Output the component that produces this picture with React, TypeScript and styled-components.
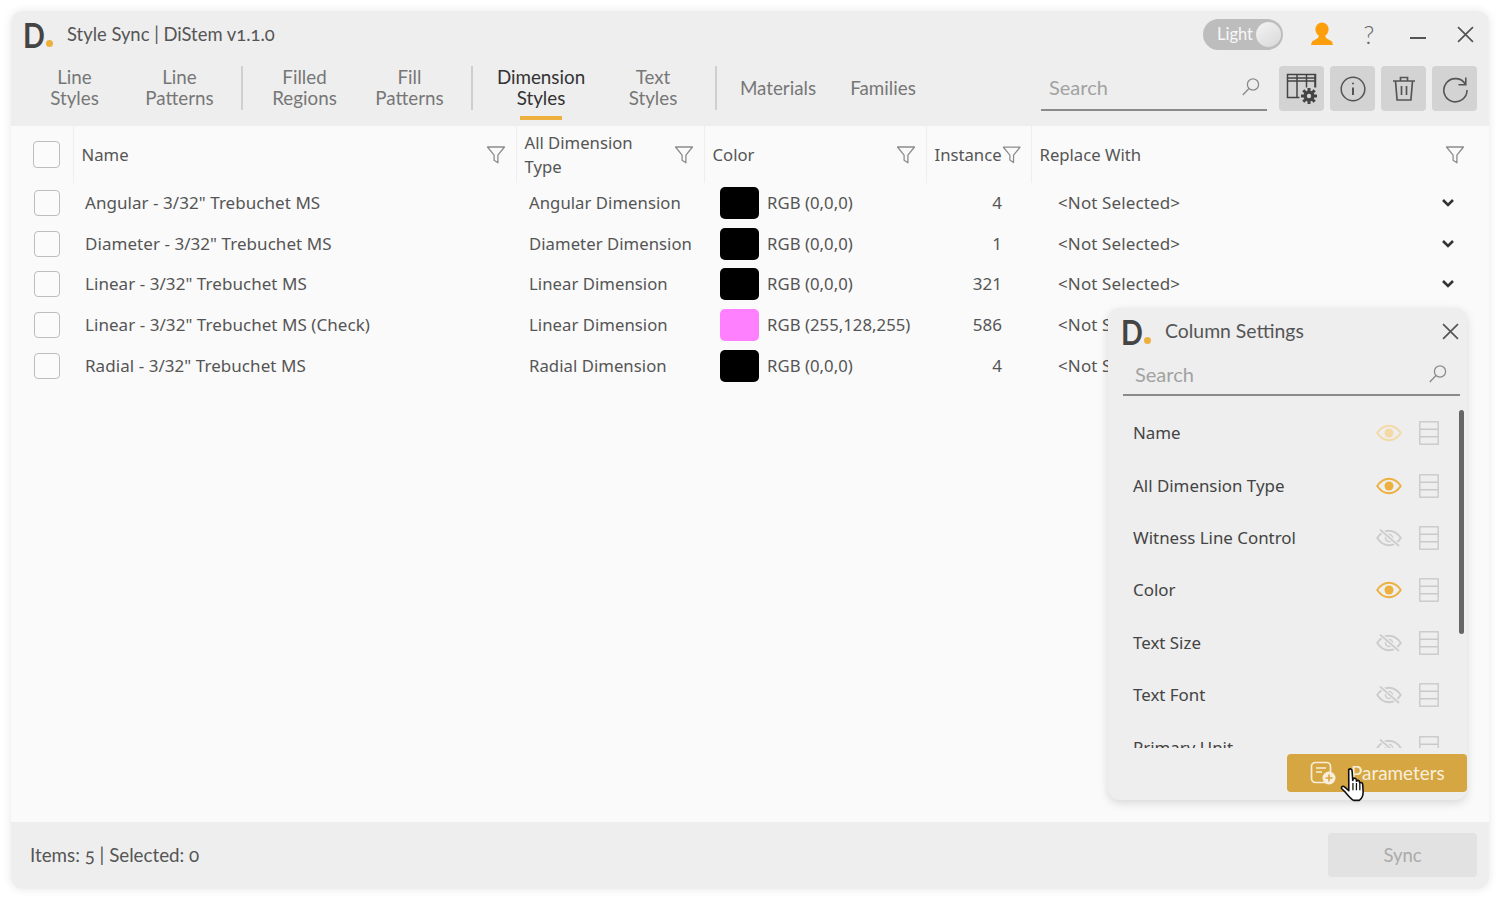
import React from 'react';
import styled, { createGlobalStyle } from 'styled-components';

const GlobalStyle = createGlobalStyle`
    html, body {
        margin: 0;
        padding: 0;
        background: #ffffff;
    }
    * {
        box-sizing: border-box;
    }
`;

const HEAD_FONT = `'Lato', 'Open Sans', sans-serif`;
const BODY_FONT = `'Noto Sans', 'Open Sans', sans-serif`;

const Page = styled.div`
    width: 1500px;
    height: 900px;
    padding: 11px;
    overflow: hidden;
`;

const Window = styled.div`
    position: relative;
    width: 1478px;
    height: 878px;
    display: flex;
    flex-direction: column;
    border-radius: 12px;
    overflow: hidden;
    background: #fafafa;
    box-shadow: 0 0 10px rgba(0, 0, 0, 0.1);
`;

const Header = styled.header`
    background: #eeeeee;
    height: 115px;
    flex: none;
`;

const TitleBar = styled.div`
    height: 46px;
    display: flex;
    align-items: center;
    padding: 0 15px 0 14px;
`;

const Logo = styled.span`
    position: relative;
    display: inline-block;
    width: 30px;
    height: 34px;

    &::after {
        content: '';
        position: absolute;
        left: 21px;
        bottom: 4px;
        width: 7px;
        height: 7px;
        border-radius: 50%;
        background: #edb03e;
    }
`;

const LogoLetter = styled.span`
    display: inline-block;
    margin-left: -2px;
    font: 700 35px/34px ${HEAD_FONT};
    color: #444444;
    transform: scaleX(0.82);
    transform-origin: left center;
`;

const AppTitle = styled.div`
    margin-left: 12px;
    font: 400 18.4px/24px ${HEAD_FONT};
    font-variant-numeric: oldstyle-nums;
    color: #555555;
`;

const TitleActions = styled.div`
    margin-left: auto;
    display: flex;
    align-items: center;
`;

const Toggle = styled.div`
    width: 80px;
    height: 31px;
    border-radius: 16px;
    background: #bdbdbd;
    display: flex;
    align-items: center;
    justify-content: space-between;
    padding: 0 2px 0 14px;
    font: 400 16.5px/20px ${HEAD_FONT};
    color: #f8f8f8;
`;

const Knob = styled.span`
    width: 25px;
    height: 25px;
    border-radius: 50%;
    background: linear-gradient(145deg, #f4f4f4, #d8d8d8);
`;

const WindowIcon = styled.span<{ $w: number }>`
    display: inline-flex;
    justify-content: center;
    align-items: center;
    width: ${(p) => p.$w}px;
    height: 30px;
`;

const Help = styled.span`
    font: 300 25px/30px ${HEAD_FONT};
    color: #666666;
`;

const TabBar = styled.div`
    height: 69px;
    display: flex;
    align-items: flex-start;
    padding: 9px 0 0 11px;
`;

const Tab = styled.div<{ $w: number; $active?: boolean }>`
    position: relative;
    width: ${(p) => p.$w}px;
    height: 44px;
    padding-bottom: 2px;
    display: flex;
    align-items: center;
    justify-content: center;
    text-align: center;
    font: 400 18.8px/21px ${HEAD_FONT};
    color: ${(p) => (p.$active ? '#333333' : '#777777')};

    &::after {
        content: '';
        display: ${(p) => (p.$active ? 'block' : 'none')};
        position: absolute;
        left: 50%;
        bottom: -10px;
        width: 42px;
        height: 4px;
        margin-left: -21px;
        background: #edb03e;
    }
`;

const TabDivider = styled.div<{ $gap: number }>`
    width: 2px;
    height: 44px;
    background: #cfcfcf;
    margin: 0 ${(p) => p.$gap}px 0 ${(p) => p.$gap}px;
`;

const SearchBox = styled.div<{ $w: number }>`
    width: ${(p) => p.$w}px;
    height: 45px;
    display: flex;
    align-items: center;
    justify-content: space-between;
    padding: 0 6px 2px 8px;
    border-bottom: 2px solid #8a8a8a;
    font: 400 20px/24px ${HEAD_FONT};
    color: #a2a2a2;
`;

const ToolSearch = styled(SearchBox)`
    margin-left: auto;
    margin-right: 12px;
`;

const ToolButtons = styled.div`
    display: flex;
    gap: 6px;
    margin-right: 12px;
`;

const ToolButton = styled.div`
    width: 45px;
    height: 45px;
    border-radius: 4px;
    background: #d3d3d3;
    display: flex;
    align-items: center;
    justify-content: center;
`;

const TableArea = styled.main`
    flex: 1;
    min-height: 0;
    background: #fafafa;
`;

const COLUMNS = '62px 443px 188px 222px 105px 444px';

const HeadRow = styled.div`
    height: 57px;
    display: grid;
    grid-template-columns: ${COLUMNS};
`;

const HeadCell = styled.div<{ $line?: boolean }>`
    display: flex;
    align-items: center;
    justify-content: space-between;
    padding: 0 10px 0 7.5px;
    border-left: ${(p) => (p.$line ? '1px solid #eeeeee' : 'none')};
    font: 400 16.7px/24px ${BODY_FONT};
    color: #555555;
`;

const CheckCell = styled.div`
    display: flex;
    align-items: center;
    padding-left: 22px;
`;

const Check = styled.span<{ $size: number }>`
    display: block;
    width: ${(p) => p.$size}px;
    height: ${(p) => p.$size}px;
    border: 1.5px solid #bdbdbd;
    border-radius: 4px;
    background: #fbfbfb;
`;

const Row = styled.div`
    height: 40.6px;
    display: grid;
    grid-template-columns: ${COLUMNS};
    font: 400 17px/24px ${BODY_FONT};
    color: #555555;
    letter-spacing: 0.05px;
`;

const RowCheck = styled(CheckCell)`
    padding-left: 23px;
`;

const Cell = styled.div`
    display: flex;
    align-items: center;
    padding-left: 12px;
    white-space: nowrap;
    overflow: hidden;
`;

const TypeCell = styled(Cell)`
    padding-left: 13px;
    font-size: 16.7px;
`;

const ColorCell = styled(Cell)`
    padding-left: 16px;
    gap: 8px;
    font-size: 16.7px;
`;

const Swatch = styled.span<{ $color: string }>`
    width: 39px;
    height: 32px;
    border-radius: 5px;
    background: ${(p) => p.$color};
`;

const CountCell = styled(Cell)`
    justify-content: flex-end;
    padding-right: 29px;
`;

const ReplaceCell = styled(Cell)`
    justify-content: space-between;
    padding-left: 27px;
    padding-right: 20px;
    letter-spacing: 0.12px;
`;

const Footer = styled.footer`
    height: 67px;
    flex: none;
    background: #eeeeee;
    display: flex;
    align-items: center;
    justify-content: space-between;
    padding: 0 12px 2px 19px;
    font: 400 18.8px/24px ${HEAD_FONT};
    font-variant-numeric: oldstyle-nums;
    color: #555555;
`;

const SyncButton = styled.div`
    width: 149px;
    height: 44px;
    border-radius: 4px;
    background: #e2e2e2;
    display: flex;
    align-items: center;
    justify-content: center;
    color: #ababab;
    font: 400 18.5px/24px ${HEAD_FONT};
`;

const Panel = styled.aside`
    position: absolute;
    top: 297px;
    right: 22px;
    width: 359px;
    height: 492px;
    border-radius: 12px;
    background: #eeeeee;
    box-shadow: 0 3px 10px rgba(0, 0, 0, 0.14);
    padding: 0 0 0 15px;
    display: flex;
    flex-direction: column;
`;

const PanelHead = styled.div`
    height: 46px;
    flex: none;
    display: flex;
    align-items: center;
    padding: 0 8px 0 0;
`;

const PanelTitle = styled.div`
    margin-left: 12px;
    font: 400 19.4px/24px ${HEAD_FONT};
    color: #555555;
`;

const PanelClose = styled.span`
    margin-left: auto;
    display: inline-flex;
`;

const PanelSearch = styled(SearchBox)`
    flex: none;
    height: 42px;
    padding-left: 12px;
    padding-right: 12px;
    padding-top: 1px;
`;

const PanelBody = styled.div`
    position: relative;
    height: 352px;
    flex: none;
    overflow: hidden;
    padding-top: 11px;
`;

const ColumnRow = styled.div`
    height: 52.4px;
    display: flex;
    align-items: center;
    padding: 0 28px 0 10px;
    font: 400 16.9px/24px ${BODY_FONT};
    color: #444444;
`;

const ColumnName = styled.span`
    flex: 1;
`;

const ColumnIcons = styled.span`
    display: flex;
    align-items: center;
    gap: 17px;
`;

const ScrollThumb = styled.div`
    position: absolute;
    top: 14px;
    right: 3px;
    width: 5px;
    height: 224px;
    border-radius: 3px;
    background: #666666;
`;

const ParamButton = styled.div`
    align-self: flex-end;
    width: 180px;
    height: 38px;
    margin-top: 6px;
    border-radius: 4px;
    background: #d6a642;
    display: flex;
    align-items: center;
    padding-left: 23px;
    gap: 15px;
    color: #f7efdc;
    font: 400 18.9px/24px ${HEAD_FONT};
`;

const Pointer = styled.span`
    position: absolute;
    left: 1340px;
    top: 767px;
    display: block;
    line-height: 0;
`;

function FilterIcon() {
    return (
        <svg width="20" height="20" viewBox="0 0 20 20" fill="none" stroke="#8c8c8c" strokeWidth="1.3" strokeLinejoin="round">
            <path d="M1.5 2h17l-6.6 8.2v7.600l-3.800-2.600v-5z" />
        </svg>
    );
}

function SearchIcon() {
    return (
        <svg width="20" height="20" viewBox="0 0 20 20" fill="none" stroke="#8a8a8a" strokeWidth="1.3">
            <circle cx="12" cy="7.500" r="5.600" />
            <path d="M8 11.500L1.800 18" />
        </svg>
    );
}

function CloseIcon({ size = 16 }: { size?: number }) {
    return (
        <svg width={size} height={size} viewBox="0 0 16 16" fill="none" stroke="#555" strokeWidth="1.6">
            <path d="M1 1l14 14M15 1L1 15" />
        </svg>
    );
}

function Chevron() {
    return (
        <svg width="14" height="10" viewBox="0 0 14 10" fill="none" stroke="#333" strokeWidth="2.6">
            <path d="M2 2l5 5 5-5" />
        </svg>
    );
}

function UserIcon() {
    return (
        <svg width="22" height="24" viewBox="0 0 22 24" fill="#fd9f0d">
            <ellipse cx="11" cy="7.500" rx="6.600" ry="7" />
            <path d="M8 13h6l1 3 6 3.400 1 3.600H0l1-3.600L7 16z" />
        </svg>
    );
}

function TableGearIcon() {
    return (
        <svg width="32" height="32" viewBox="0 0 32 32" fill="none">
            <g stroke="#444" strokeWidth="1.5">
                <rect x="1.500" y="1.500" width="28" height="23" />
                <path d="M1.500 5h28M1.500 8h28M11 1.500v23M20.500 1.500v16M29 1.500v16" />
            </g>
            <rect x="13.500" y="14.500" width="18" height="17" fill="#d3d3d3" />
            <circle cx="23" cy="23" r="5.500" fill="#444" />
            <path d="M23 15v16M15 23h16M17.300 17.300l11.400 11.400M28.700 17.300L17.300 28.700" stroke="#444" strokeWidth="3" />
            <circle cx="23" cy="23" r="2.200" fill="#d3d3d3" />
        </svg>
    );
}

function InfoIcon() {
    return (
        <svg width="28" height="28" viewBox="0 0 28 28" fill="none" stroke="#555" strokeWidth="1.5">
            <circle cx="14" cy="14" r="11.800" />
            <path d="M14 12.500v7.500" strokeWidth="2" />
            <circle cx="14" cy="8.600" r="1" fill="#555" stroke="none" />
        </svg>
    );
}

function TrashIcon() {
    return (
        <svg width="26" height="28" viewBox="0 0 26 28" fill="none" stroke="#555" strokeWidth="1.7">
            <path d="M2 6h22M9.500 6V2.500h7V6M4.500 6l1.600 19h13.800L21.500 6M10.500 11v9M15.500 11v9" />
        </svg>
    );
}

function RefreshIcon() {
    return (
        <svg width="28" height="28" viewBox="0 0 28 28" fill="none" stroke="#555" strokeWidth="1.6">
            <path d="M24.500 9.500A11.600 11.600 0 1 0 26 15" />
            <path d="M24.800 2.500v7.300h-7.300" />
        </svg>
    );
}

function EyeIcon({ tone }: { tone: 'on' | 'faint' | 'off' }) {
    const color = tone === 'on' ? '#edb03e' : tone === 'faint' ? '#f3d9a4' : '#cccccc';
    return (
        <svg width="26" height="18" viewBox="0 0 26 18" fill="none" stroke={color} strokeWidth="1.9">
            <path d="M1.200 9C4.500 4 8.500 1.800 13 1.800S21.500 4 24.800 9C21.500 14 17.500 16.200 13 16.200S4.500 14 1.200 9z" />
            {tone === 'off' ? (
                <>
                    <circle cx="13" cy="9" r="3.500" strokeWidth="1.500" />
                    <path d="M4 0.500L23 17" stroke="#eeeeee" strokeWidth="4" />
                    <path d="M4 0.500L23 17" strokeWidth="1.700" />
                </>
            ) : (
                <circle cx="13" cy="9" r="4.500" fill={color} stroke="none" />
            )}
        </svg>
    );
}

function RowsIcon() {
    return (
        <svg width="20" height="24" viewBox="0 0 20 24" fill="none" stroke="#c9c9c9" strokeWidth="1.4">
            <rect x="0.800" y="0.800" width="18.400" height="22.400" />
            <path d="M0.800 8.300h18.400M0.800 15.700h18.400" />
        </svg>
    );
}

function ParamIcon() {
    return (
        <svg width="26" height="24" viewBox="0 0 26 24" fill="none" stroke="#f7efdc" strokeWidth="1.700">
            <rect x="1.500" y="1.500" width="19" height="20" rx="4" />
            <path d="M6 7h10M6 11h6" />
            <circle cx="19" cy="17" r="6.500" fill="#f7efdc" stroke="none" />
            <path d="M15.500 17h7M19 13.500v7" stroke="#d6a642" strokeWidth="1.600" />
        </svg>
    );
}

function HandCursor() {
    return (
        <svg width="28" height="36" viewBox="0 0 26 34">
            <path
                d="M8 2.500c1.300-1.300 3-.6 3.200 1.200l.6 9 .4-1.200c.8-1.500 2.800-1.200 3 .5l.2 1.500c.6-1.300 2.600-1.100 2.800.5l.2 1.300c.7-1 2.600-.8 2.800.9l.4 6.800c.2 4-1.600 7-3.600 8.500h-5.500c-2.500-1.500-5-4.500-7.500-7.500L1.500 20.500c-1-1.500.8-3 2.500-1.800l4.100 3.600z"
                fill="#ffffff"
                stroke="#111111"
                strokeWidth="1.500"
                strokeLinejoin="round"
            />
            <path d="M12 15v7M15.300 15v7M18.500 16v6" stroke="#111111" strokeWidth="1.200" fill="none" />
        </svg>
    );
}

const rows = [
    { name: 'Angular - 3/32" Trebuchet MS', type: 'Angular Dimension', color: '#000000', rgb: 'RGB (0,0,0)', count: 4 },
    { name: 'Diameter - 3/32" Trebuchet MS', type: 'Diameter Dimension', color: '#000000', rgb: 'RGB (0,0,0)', count: 1 },
    { name: 'Linear - 3/32" Trebuchet MS', type: 'Linear Dimension', color: '#000000', rgb: 'RGB (0,0,0)', count: 321 },
    { name: 'Linear - 3/32" Trebuchet MS (Check)', type: 'Linear Dimension', color: '#ff80ff', rgb: 'RGB (255,128,255)', count: 586 },
    { name: 'Radial - 3/32" Trebuchet MS', type: 'Radial Dimension', color: '#000000', rgb: 'RGB (0,0,0)', count: 4 },
];

const columnSettings: { name: string; tone: 'on' | 'faint' | 'off' }[] = [
    { name: 'Name', tone: 'faint' },
    { name: 'All Dimension Type', tone: 'on' },
    { name: 'Witness Line Control', tone: 'off' },
    { name: 'Color', tone: 'on' },
    { name: 'Text Size', tone: 'off' },
    { name: 'Text Font', tone: 'off' },
    { name: 'Primary Unit', tone: 'off' },
];

export default function App() {
    return (
        <Page>
            <GlobalStyle />
            <Window>
                <Header>
                    <TitleBar>
                        <Logo>
                            <LogoLetter>D</LogoLetter>
                        </Logo>
                        <AppTitle>Style Sync | DiStem v1.1.0</AppTitle>
                        <TitleActions>
                            <Toggle>
                                Light
                                <Knob />
                            </Toggle>
                            <WindowIcon $w={77}>
                                <UserIcon />
                            </WindowIcon>
                            <WindowIcon $w={18}>
                                <Help>?</Help>
                            </WindowIcon>
                            <WindowIcon $w={79}>
                                <svg width="16" height="16" viewBox="0 0 16 16" stroke="#555" strokeWidth="2">
                                    <path d="M0 12h16" />
                                </svg>
                            </WindowIcon>
                            <CloseIcon size={17} />
                        </TitleActions>
                    </TitleBar>
                    <TabBar>
                        <Tab $w={105}>
                            Line
                            <br />
                            Styles
                        </Tab>
                        <Tab $w={105}>
                            Line
                            <br />
                            Patterns
                        </Tab>
                        <TabDivider $gap={9} />
                        <Tab $w={105}>
                            Filled
                            <br />
                            Regions
                        </Tab>
                        <Tab $w={105}>
                            Fill
                            <br />
                            Patterns
                        </Tab>
                        <TabDivider $gap={9} />
                        <Tab $w={118} $active>
                            Dimension
                            <br />
                            Styles
                        </Tab>
                        <Tab $w={106}>
                            Text
                            <br />
                            Styles
                        </Tab>
                        <TabDivider $gap={9} />
                        <Tab $w={104}>Materials</Tab>
                        <Tab $w={106}>Families</Tab>
                        <ToolSearch $w={226}>
                            Search
                            <SearchIcon />
                        </ToolSearch>
                        <ToolButtons>
                            <ToolButton>
                                <TableGearIcon />
                            </ToolButton>
                            <ToolButton>
                                <InfoIcon />
                            </ToolButton>
                            <ToolButton>
                                <TrashIcon />
                            </ToolButton>
                            <ToolButton>
                                <RefreshIcon />
                            </ToolButton>
                        </ToolButtons>
                    </TabBar>
                </Header>
                <TableArea>
                    <HeadRow>
                        <CheckCell>
                            <Check $size={27} />
                        </CheckCell>
                        <HeadCell $line>
                            Name
                            <FilterIcon />
                        </HeadCell>
                        <HeadCell $line>
                            <span>
                                All Dimension
                                <br />
                                Type
                            </span>
                            <FilterIcon />
                        </HeadCell>
                        <HeadCell $line>
                            Color
                            <FilterIcon />
                        </HeadCell>
                        <HeadCell $line>
                            Instance
                            <FilterIcon />
                        </HeadCell>
                        <HeadCell $line>
                            Replace With
                            <FilterIcon />
                        </HeadCell>
                    </HeadRow>
                    {rows.map((row) => (
                        <Row key={row.name}>
                            <RowCheck>
                                <Check $size={26} />
                            </RowCheck>
                            <Cell>{row.name}</Cell>
                            <TypeCell>{row.type}</TypeCell>
                            <ColorCell>
                                <Swatch $color={row.color} />
                                {row.rgb}
                            </ColorCell>
                            <CountCell>{row.count}</CountCell>
                            <ReplaceCell>
                                {'<Not Selected>'}
                                <Chevron />
                            </ReplaceCell>
                        </Row>
                    ))}
                </TableArea>
                <Footer>
                    <span>Items: 5 | Selected: 0</span>
                    <SyncButton>Sync</SyncButton>
                </Footer>
                <Panel>
                    <PanelHead>
                        <Logo>
                            <LogoLetter>D</LogoLetter>
                        </Logo>
                        <PanelTitle>Column Settings</PanelTitle>
                        <PanelClose>
                            <CloseIcon size={17} />
                        </PanelClose>
                    </PanelHead>
                    <PanelSearch $w={337}>
                        Search
                        <SearchIcon />
                    </PanelSearch>
                    <PanelBody>
                        {columnSettings.map((c) => (
                            <ColumnRow key={c.name}>
                                <ColumnName>{c.name}</ColumnName>
                                <ColumnIcons>
                                    <EyeIcon tone={c.tone} />
                                    <RowsIcon />
                                </ColumnIcons>
                            </ColumnRow>
                        ))}
                        <ScrollThumb />
                    </PanelBody>
                    <ParamButton>
                        <ParamIcon />
                        Parameters
                    </ParamButton>
                </Panel>
            </Window>
            <Pointer>
                <HandCursor />
            </Pointer>
        </Page>
    );
}
